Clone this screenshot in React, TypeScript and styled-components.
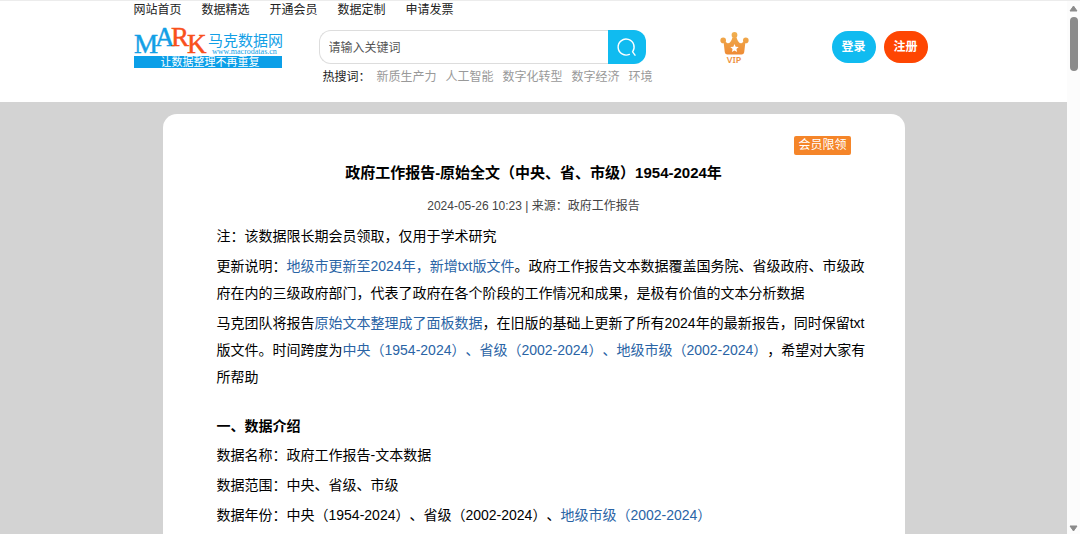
import React from 'react';
import styled, { createGlobalStyle } from 'styled-components';

const GlobalStyle = createGlobalStyle`
  * { box-sizing: border-box; }
  html, body { margin: 0; padding: 0; }
  body {
    background: #fff;
    color: #000;
    font-family: "Liberation Sans", "Noto Sans CJK SC", sans-serif;
    font-size: 12px;
    text-spacing-trim: space-all;
  }
  a { color: inherit; text-decoration: none; }
  h1, h2, p, ul { margin: 0; padding: 0; }
  ul { list-style: none; }
`;

const Shell = styled.div`
  display: grid;
  grid-template-columns: minmax(0, 1fr) 13px;
  height: 100vh;
  border-top: 1px solid #ececec;
`;

const Page = styled.div`
  display: flex;
  flex-direction: column;
  overflow-y: auto;
  scrollbar-width: none;
  background: #d3d3d3;
`;

const Header = styled.header`
  background: #fff;
  padding-bottom: 15px;
`;

const HeaderInner = styled.div`
  width: 100%;
  max-width: 800px;
  margin: 0 auto;
`;

const Nav = styled.nav`
  display: flex;
  gap: 20px;
  line-height: 18px;
  color: #222;
`;

const Tools = styled.div`
  display: flex;
  align-items: flex-start;
  padding-top: 8px;
`;

const LogoLink = styled.a`
  display: block;
  width: 148px;
  margin-right: 37px;
  svg { display: block; overflow: visible; }
`;

const SearchBlock = styled.div`
  width: 336px;
  padding-top: 3px;
`;

const SearchForm = styled.form`
  display: flex;
  width: 327px;
  height: 34px;
`;

const SearchInput = styled.input`
  flex: 1;
  min-width: 0;
  padding: 1px 9px 0;
  border: 1px solid #ddd;
  border-right: 0;
  border-radius: 12px 0 0 12px;
  background: #fff;
  font: inherit;
  outline: none;
  &::placeholder { color: #555; opacity: 1; }
`;

const SearchButton = styled.button`
  display: flex;
  align-items: center;
  justify-content: center;
  width: 38px;
  padding: 0;
  border: 0;
  border-radius: 0 12px 12px 0;
  background: #10bbf0;
  cursor: pointer;
`;

const HotWords = styled.div`
  display: flex;
  padding: 4px 0 0 4px;
  line-height: 19px;
  white-space: nowrap;
  color: #222;
`;

const HotList = styled.ul`
  display: flex;
  gap: 9px;
  padding-left: 6px;
  color: #999;
`;

const VipLink = styled.a`
  display: flex;
  flex-direction: column;
  align-items: center;
  margin-left: 65px;
  padding-top: 5px;
  color: #ee9140;
  font: 600 9px/10px "Noto Sans", sans-serif;
  svg { display: block; }
`;

const Account = styled.div`
  display: flex;
  gap: 8px;
  margin-left: auto;
  padding: 4px 6px 0 0;
`;

const AccountButton = styled.button<{ $color: string }>`
  width: 44px;
  height: 32px;
  padding: 0;
  border: 0;
  border-radius: 16px;
  background: ${(p) => p.$color};
  color: #fff;
  font: bold 12px/32px "Liberation Sans", "Noto Sans CJK SC", sans-serif;
  cursor: pointer;
`;

const Card = styled.main`
  flex: 1 0 auto;
  width: 100%;
  max-width: 742px;
  margin: 12px auto 0;
  padding: 22px 0 6px;
  border-radius: 14px 14px 0 0;
  background: #fff;
`;

const Heading = styled.div`
  display: flex;
  flex-direction: column;
  align-items: center;
  padding: 0 54px;
`;

const Badge = styled.span`
  align-self: flex-end;
  padding: 0 4px;
  border-radius: 2px;
  background: #f58529;
  color: #fff;
  line-height: 19px;
`;

const Title = styled.h1`
  margin-top: 6px;
  font-size: 15px;
  line-height: 24px;
`;

const Meta = styled.p`
  margin-top: 12px;
  color: #444;
  line-height: 18px;
`;

const Article = styled.article`
  display: flex;
  flex-direction: column;
  gap: 3px;
  padding: 8px 28px 0 54px;
  font-size: 14px;
  line-height: 27px;
`;

const SectionTitle = styled.h2`
  margin-top: 19px;
  font-size: 14px;
  line-height: 26px;
`;

const Mark = styled.span`
  color: #2a64a5;
`;

const ScrollTrack = styled.div`
  display: flex;
  flex-direction: column;
  align-items: center;
  padding: 4px 0 2px;
  background: #fcfcfc;
  svg { display: block; }
`;

const ScrollThumb = styled.div`
  width: 8px;
  height: 54px;
  margin: 5px 0 auto;
  border-radius: 4px;
  background: #8b8b8b;
`;

const navItems = ['网站首页', '数据精选', '开通会员', '数据定制', '申请发票'];
const hotWords = ['新质生产力', '人工智能', '数字化转型', '数字经济', '环境'];

const Logo = () => (
  <svg width="148" height="42" viewBox="0 0 148 42" role="img" aria-label="马克数据网">
    <g fontFamily="Liberation Serif, serif" fontSize="27" strokeWidth="0.5">
      <text x="0" y="26" fill="#139fe6" stroke="#139fe6">M</text>
      <text x="21" y="19" fill="#139fe6" stroke="#139fe6">A</text>
      <text x="37" y="19" fill="#f9501c" stroke="#f9501c">R</text>
      <text x="53" y="26" fill="#f9501c" stroke="#f9501c">K</text>
    </g>
    <text x="74" y="19" fill="#139fe6" fontFamily="Noto Sans CJK SC, sans-serif" fontSize="15">马克数据网</text>
    <text x="78" y="27" fill="#139fe6" fontFamily="Liberation Serif, serif" fontSize="8">www.macrodatas.cn</text>
    <rect x="0" y="29" width="148" height="12" fill="#0b9fe8" />
    <text x="76" y="39" textAnchor="middle" fill="#fff" fontFamily="Noto Sans CJK SC, sans-serif" fontSize="11">让数据整理不再重复</text>
  </svg>
);

const SearchIcon = () => (
  <svg width="20" height="20" viewBox="0 0 20 20" fill="none" stroke="#fff" strokeWidth="1.4" strokeLinecap="round" aria-hidden="true">
    <path d="M12.4 17.4A8 8 0 1 1 15.6 14.8L18 18.2" />
  </svg>
);

const Crown = () => (
  <svg width="29" height="23" viewBox="0 0 29 23" aria-hidden="true">
    <defs>
      <linearGradient id="crown" gradientUnits="userSpaceOnUse" x1="0" y1="0" x2="0" y2="23">
        <stop offset="0" stopColor="#f0b050" />
        <stop offset="1" stopColor="#ee8a34" />
      </linearGradient>
    </defs>
    <g fill="url(#crown)">
      <path d="M3.4 8.6 7.6 11.2Q10.6 11.6 12.6 5.2L16.4 5.2Q18.4 11.6 21.4 11.2L25.6 8.6 24.2 20.2Q23.8 22.6 21.6 22.6L7.4 22.6Q5.2 22.6 4.8 20.2Z" />
      <circle cx="14.5" cy="3" r="2.9" />
      <circle cx="3.2" cy="8.4" r="2.8" />
      <circle cx="25.8" cy="8.4" r="2.8" />
    </g>
    <path fill="#fff" d="M14.5 12 15.7 14.8 18.7 15 16.4 17 17.1 20 14.5 18.4 11.9 20 12.6 17 10.3 15 13.3 14.8Z" />
  </svg>
);

const Arrow = ({ down = false }: { down?: boolean }) => (
  <svg width="9" height="7" viewBox="0 0 9 7" fill="#8b8b8b" stroke="#8b8b8b" strokeLinejoin="round" aria-hidden="true">
    <path d={down ? 'M1 1 8 1 4.5 6Z' : 'M1 6 8 6 4.5 1Z'} />
  </svg>
);

export default function App() {
  return (
    <>
      <GlobalStyle />
      <Shell>
        <Page>
          <Header>
            <HeaderInner>
              <Nav>
                {navItems.map((item) => (
                  <a href="#" key={item}>{item}</a>
                ))}
              </Nav>
              <Tools>
                <LogoLink href="#"><Logo /></LogoLink>
                <SearchBlock>
                  <SearchForm>
                    <SearchInput type="text" placeholder="请输入关键词" aria-label="请输入关键词" />
                    <SearchButton type="button" aria-label="搜索"><SearchIcon /></SearchButton>
                  </SearchForm>
                  <HotWords>
                    <span>热搜词：</span>
                    <HotList>
                      {hotWords.map((word) => (
                        <li key={word}><a href="#">{word}</a></li>
                      ))}
                    </HotList>
                  </HotWords>
                </SearchBlock>
                <VipLink href="#"><Crown />VIP</VipLink>
                <Account>
                  <AccountButton type="button" $color="#10bbf0">登录</AccountButton>
                  <AccountButton type="button" $color="#fe4602">注册</AccountButton>
                </Account>
              </Tools>
            </HeaderInner>
          </Header>
          <Card>
            <Heading>
              <Badge>会员限领</Badge>
              <Title>政府工作报告-原始全文（中央、省、市级）1954-2024年</Title>
              <Meta>2024-05-26 10:23 | 来源：政府工作报告</Meta>
            </Heading>
            <Article>
              <p>注：该数据限长期会员领取，仅用于学术研究</p>
              <p>
                更新说明：<Mark>地级市更新至2024年，新增txt版文件</Mark>。政府工作报告文本数据覆盖国务院、省级政府、市级政府在内的三级政府部门，代表了政府在各个阶段的工作情况和成果，是极有价值的文本分析数据
              </p>
              <p>
                马克团队将报告<Mark>原始文本整理成了面板数据</Mark>，在旧版的基础上更新了所有2024年的最新报告，同时保留txt版文件。时间跨度为<Mark>中央（1954-2024）、省级（2002-2024）、地级市级（2002-2024）</Mark>，希望对大家有所帮助
              </p>
              <SectionTitle>一、数据介绍</SectionTitle>
              <p>数据名称：政府工作报告-文本数据</p>
              <p>数据范围：中央、省级、市级</p>
              <p>
                数据年份：中央（1954-2024）、省级（2002-2024）、<Mark>地级市级（2002-2024）</Mark>
              </p>
            </Article>
          </Card>
        </Page>
        <ScrollTrack aria-hidden="true">
          <Arrow />
          <ScrollThumb />
          <Arrow down />
        </ScrollTrack>
      </Shell>
    </>
  );
}
